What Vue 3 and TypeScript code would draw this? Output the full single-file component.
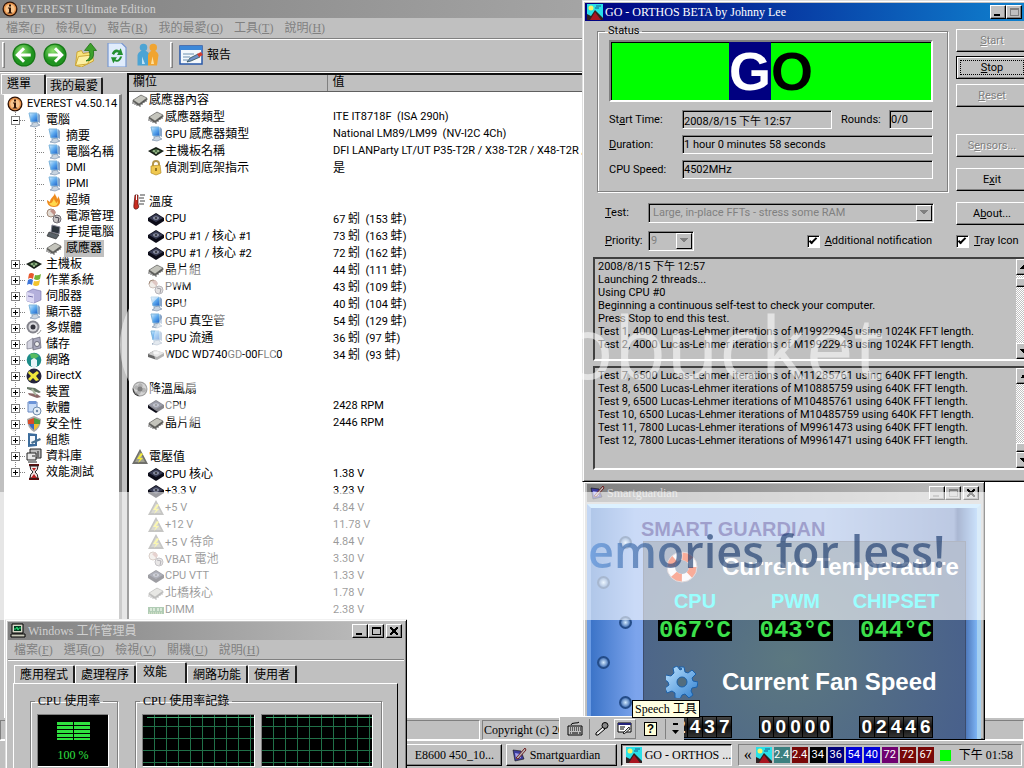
<script setup lang="ts">
import { h, ref } from 'vue'
import type { FunctionalComponent } from 'vue'

interface TreeNode { label: string; icon: string; children?: TreeNode[]; selected?: boolean }
interface Row { label: string; icon: string; value?: string; head?: boolean; blank?: boolean }

const Mixed: FunctionalComponent<{ text: string }> = (props) =>
  h('span', { class: 'mixed' },
    props.text.split(/([\u4e00-\u9fff]+)/).filter(Boolean).map((run) =>
      /[\u4e00-\u9fff]/.test(run) ? h('span', { class: 'han' }, run) : run))
Mixed.props = ['text']

const Icon: FunctionalComponent<{ name: string }> = (props) =>
  h('svg', { class: 'icon', viewBox: '0 0 16 16', 'aria-hidden': 'true' }, [h('use', { href: '#i-' + props.name })])
Icon.props = ['name']

const mainMenu = [['檔案', 'F'], ['檢視', 'V'], ['報告', 'R'], ['我的最愛', 'O'], ['工具', 'T'], ['說明', 'H']]
const taskMenu = [['檔案', 'F'], ['選項', 'O'], ['檢視', 'V'], ['關機', 'U'], ['說明', 'H']]
const tools = [['back', '上一頁'], ['forward', '下一頁'], ['folder', '上層'], ['refresh', '重新整理'], ['users', '使用者']]

const computer: TreeNode[] = [
  { label: '摘要', icon: 'pc' }, { label: '電腦名稱', icon: 'pc' }, { label: 'DMI', icon: 'pc' }, { label: 'IPMI', icon: 'pc' },
  { label: '超頻', icon: 'fire' }, { label: '電源管理', icon: 'power' }, { label: '手提電腦', icon: 'laptop' },
  { label: '感應器', icon: 'chip', selected: true },
]
const tree: TreeNode[] = [
  { label: '電腦', icon: 'pc', children: computer },
  { label: '主機板', icon: 'board' }, { label: '作業系統', icon: 'flag' }, { label: '伺服器', icon: 'server' },
  { label: '顯示器', icon: 'pc' }, { label: '多媒體', icon: 'speaker' }, { label: '儲存', icon: 'storage' },
  { label: '網路', icon: 'globe' }, { label: 'DirectX', icon: 'directx' }, { label: '裝置', icon: 'device' },
  { label: '軟體', icon: 'software' }, { label: '安全性', icon: 'shield' }, { label: '組態', icon: 'config' },
  { label: '資料庫', icon: 'database' }, { label: '效能測試', icon: 'hourglass' },
]

const rows: Row[] = [
  { label: '感應器內容', icon: 'chip', head: true },
  { label: '感應器類型', icon: 'chip', value: 'ITE IT8718F  (ISA 290h)' },
  { label: 'GPU 感應器類型', icon: 'pc', value: 'National LM89/LM99  (NV-I2C 4Ch)' },
  { label: '主機板名稱', icon: 'board', value: 'DFI LANParty LT/UT P35-T2R / X38-T2R / X48-T2R /' },
  { label: '偵測到底架指示', icon: 'lock', value: '是' },
  { label: '', icon: '', blank: true },
  { label: '溫度', icon: 'thermo', head: true },
  { label: 'CPU', icon: 'cpu', value: '67 蚓  (153 蚌)' },
  { label: 'CPU #1 / 核心 #1', icon: 'cpu', value: '73 蚓  (163 蚌)' },
  { label: 'CPU #1 / 核心 #2', icon: 'cpu', value: '72 蚓  (162 蚌)' },
  { label: '晶片組', icon: 'chip', value: '44 蚓  (111 蚌)' },
  { label: 'PWM', icon: 'power', value: '43 蚓  (109 蚌)' },
  { label: 'GPU', icon: 'pc', value: '40 蚓  (104 蚌)' },
  { label: 'GPU 真空管', icon: 'pc', value: '54 蚓  (129 蚌)' },
  { label: 'GPU 流通', icon: 'pc', value: '36 蚓  (97 蚌)' },
  { label: 'WDC WD740GD-00FLC0', icon: 'disk', value: '34 蚓  (93 蚌)' },
  { label: '', icon: '', blank: true },
  { label: '降溫風扇', icon: 'fan', head: true },
  { label: 'CPU', icon: 'cpu', value: '2428 RPM' },
  { label: '晶片組', icon: 'chip', value: '2446 RPM' },
  { label: '', icon: '', blank: true },
  { label: '電壓值', icon: 'volt', head: true },
  { label: 'CPU 核心', icon: 'cpu', value: '1.38 V' },
  { label: '+3.3 V', icon: 'cpu', value: '3.23 V' },
  { label: '+5 V', icon: 'volt', value: '4.84 V' },
  { label: '+12 V', icon: 'volt', value: '11.78 V' },
  { label: '+5 V 待命', icon: 'volt', value: '4.84 V' },
  { label: 'VBAT 電池', icon: 'power', value: '3.30 V' },
  { label: 'CPU VTT', icon: 'cpu', value: '1.33 V' },
  { label: '北橋核心', icon: 'chip', value: '1.78 V' },
  { label: 'DIMM', icon: 'dimm', value: '2.38 V' },
]

const logA = ref(`2008/8/15 下午 12:57
Launching 2 threads...
Using CPU #0
Beginning a continuous self-test to check your computer.
Press Stop to end this test.
Test 1, 4000 Lucas-Lehmer iterations of M19922945 using 1024K FFT length.
Test 2, 4000 Lucas-Lehmer iterations of M19922943 using 1024K FFT length.`)
const logB = ref(`Test 7, 6500 Lucas-Lehmer iterations of M11285761 using 640K FFT length.
Test 8, 6500 Lucas-Lehmer iterations of M10885759 using 640K FFT length.
Test 9, 6500 Lucas-Lehmer iterations of M10485761 using 640K FFT length.
Test 10, 6500 Lucas-Lehmer iterations of M10485759 using 640K FFT length.
Test 11, 7800 Lucas-Lehmer iterations of M9961473 using 640K FFT length.
Test 12, 7800 Lucas-Lehmer iterations of M9961471 using 640K FFT length.`)

const notify = ref(true)
const trayIcon = ref(true)
const temps = [['CPU', '067°C'], ['PWM', '043°C'], ['CHIPSET', '044°C']]
const fans = ['02437', '00000', '02446']
const tray = [['2.4', 'teal'], ['2.4', 'maroon'], ['34', 'black'], ['36', 'navy'], ['54', 'blue'], ['40', 'blue'], ['72', 'purple'], ['72', 'maroon'], ['67', 'maroon']]
</script>

<template>
  <div class="desktop">
    <svg class="defs" aria-hidden="true">
      <defs>
        <linearGradient id="g-blue" x1="0" y1="0" x2="1" y2="1"><stop offset="0" stop-color="#d6f0ff" /><stop offset=".5" stop-color="#5aa8ee" /><stop offset="1" stop-color="#1c5cc4" /></linearGradient>
        <radialGradient id="g-green" cx=".4" cy=".3"><stop offset="0" stop-color="#8fe070" /><stop offset="1" stop-color="#1f9420" /></radialGradient>
        <linearGradient id="g-ring" x1="0" y1="0" x2="1" y2="1"><stop offset="0" stop-color="#bfe4ff" /><stop offset="1" stop-color="#2f7fd0" /></linearGradient>
      </defs>
      <symbol id="i-info" viewBox="0 0 16 16"><circle cx="8" cy="8" r="7.5" fill="#2c1206" /><circle cx="8" cy="8" r="6.2" fill="#e8924a" /><circle cx="8" cy="8" r="4.8" fill="#f6c48c" /><path d="M6 6.5h3v5h1.200v1h-4.500v-1h1.300v-4H6zM7 3.500h2v2H7z" fill="#2c1206" /></symbol>
      <symbol id="i-pc" viewBox="0 0 16 16"><path d="M3 1l8 0 1 9-7 0z" fill="url(#g-blue)" stroke="#7db4dc" /><path d="M12 1l2 2v8l-2-1z" fill="#8aa6c8" /><path d="M6 11l5-1 1 2 2 1-5 2-5-1 2-1z" fill="#c8d4e0" stroke="#7088a4" stroke-width=".6" /></symbol>
      <symbol id="i-fire" viewBox="0 0 16 16"><path d="M9 1c0 3 2 3 2 6 1-1 1-2 1-3 4 6 2 11-4 11-5 0-7-3-7-7l3 2c0-4 4-5 5-9z" fill="#ee8a1c" /><path d="M8 6c0 3 2 3 2 5 1 0 1-1 2-2 0 4-2 5-4 5-3 0-4-1-5-3 3 1 4-2 5-5z" fill="#ffd84c" /></symbol>
      <symbol id="i-power" viewBox="0 0 16 16"><circle cx="5" cy="5" r="4" fill="#e4dcd4" stroke="#a08878" /><path d="M4 3l3-2 3 3-2 3z" fill="#c09088" /><circle cx="11" cy="11" r="4" fill="#c8c4c4" stroke="#706c74" /><path d="M9 9l4 1-1 4" fill="none" stroke="#403c48" /></symbol>
      <symbol id="i-laptop" viewBox="0 0 16 16"><path d="M6 1l8 2-1 7-8-2z" fill="#2c343c" stroke="#889" /><path d="M3 8l10 3-3 4-9-3z" fill="#596168" stroke="#222" stroke-width=".6" /></symbol>
      <symbol id="i-chip" viewBox="0 0 16 16"><path d="M0 9l9-6 7 4-9 7z" fill="#60605c" /><path d="M1 8l8-5 6 3-8 6z" fill="#c4c4bc" stroke="#444" stroke-width=".5" /><path d="M1 10v2M3 11v2M5 12v2M8 13v2M10 11v2M12 9v2M14 8v2" stroke="#333" stroke-width=".8" /></symbol>
      <symbol id="i-board" viewBox="0 0 16 16"><path d="M0 8l8-4 8 4-8 5z" fill="#182018" /><path d="M3 8l5-2 5 2-5 3z" fill="#4c7048" /><path d="M5 8h2M9 8h2M7 10h2" stroke="#d0e8b8" /></symbol>
      <symbol id="i-flag" viewBox="0 0 16 16"><path d="M3 2q2-2 5 0L7 7Q4 5 2 7z" fill="#e8582c" /><path d="M9 3q3 1 6-1l-1 5q-3 2-6 0z" fill="#74b438" /><path d="M2 8q3-2 5 0l-1 5q-3-2-5 0z" fill="#3c74d8" /><path d="M8 9q3 1 6-1l-1 5q-3 2-6 0z" fill="#f4c42c" /></symbol>
      <symbol id="i-server" viewBox="0 0 16 16"><path d="M1 4l6-3 8 2v9l-7 3-7-2z" fill="#b4b0dc" stroke="#7470a8" stroke-width=".6" /><path d="M1 4l7 2v9l-7-2z" fill="#dcd8f4" /><path d="M2 8l5 1" stroke="#7470a8" /></symbol>
      <symbol id="i-speaker" viewBox="0 0 16 16"><circle cx="7" cy="7" r="6.500" fill="#84848c" /><circle cx="7" cy="7" r="4.500" fill="#d8d8dc" /><circle cx="7" cy="7" r="2.500" fill="#34343c" /><path d="M11 14q3-1 4-4" stroke="#999" fill="none" /></symbol>
      <symbol id="i-storage" viewBox="0 0 16 16"><path d="M1 6l6-4v10l-6 1z" fill="#d4d4e0" stroke="#667" stroke-width=".6" /><path d="M7 3l7-2 1 11-8 2z" fill="#a8a8bc" stroke="#556" stroke-width=".6" /><circle cx="11" cy="8" r="2.500" fill="#eee" stroke="#445" stroke-width=".7" /></symbol>
      <symbol id="i-globe" viewBox="0 0 16 16"><circle cx="8" cy="8" r="7.300" fill="#1c8c88" /><path d="M4 2q6-2 9 2l-4 3-4-1z" fill="#58bc60" /><path d="M5 8l3-2 3 2v6l-3 2-3-2z" fill="#e8f4f8" /></symbol>
      <symbol id="i-directx" viewBox="0 0 16 16"><circle cx="8" cy="8" r="7.500" fill="#24243c" /><path d="M3 3l4 3 4-3 2 2-3 3 3 4-3 1-3-3-3 3-2-2 3-3-3-3z" fill="#f0e83c" /></symbol>
      <symbol id="i-device" viewBox="0 0 16 16"><path d="M1 3l8 1 6 4-2 1-12-4z" fill="#687868" /><path d="M2 9l9 1 4 3-4 1-8-3z" fill="#8c6868" /><path d="M6 5l4 6" stroke="#a8b8a0" stroke-width="2" /></symbol>
      <symbol id="i-software" viewBox="0 0 16 16"><path d="M2 2h9v10H2z" fill="#c8dcf8" stroke="#6888c0" /><path d="M3 1h7v3H3z" fill="#6c94d8" /><circle cx="11" cy="11" r="4" fill="#e8f0f8" stroke="#708cac" /><circle cx="11" cy="11" r="1.200" fill="#708cac" /></symbol>
      <symbol id="i-shield" viewBox="0 0 16 16"><path d="M8 0l7 3q0 9-7 13Q1 12 1 3z" fill="#a8a8a8" /><path d="M8 2v6H2L2 4z" fill="#d84c28" /><path d="M8 2l6 2v4H8z" fill="#4c9c3c" /><path d="M3 8h5v6q-4-3-5-6z" fill="#3c68c0" /><path d="M8 8h5q-1 4-5 6z" fill="#f0c030" /></symbol>
      <symbol id="i-config" viewBox="0 0 16 16"><path d="M2 1l9 1v12l-9 1z" fill="#3c6c9c" /><path d="M4 4h5v8H4z" fill="#f4f8fc" /><path d="M5 10l9-4 1 2-9 4z" fill="#487090" /></symbol>
      <symbol id="i-database" viewBox="0 0 16 16"><path d="M4 1h11v9H4z" fill="#bcbcbc" stroke="#222" /><path d="M1 5h9v7H1z" fill="#e8e8e8" stroke="#222" /><path d="M2 14h9M6 8h3M12 3v6" stroke="#222" /></symbol>
      <symbol id="i-hourglass" viewBox="0 0 16 16"><path d="M3 1h10M3 15h10" stroke="#5c1010" stroke-width="2" /><path d="M4 2h8q0 4-3 6 3 2 3 6H4q0-4 3-6-3-2-3-6z" fill="#f4e4e4" stroke="#222" /><path d="M6 4h4L8 7zM5 14l3-4 3 4z" fill="#b82020" /></symbol>
      <symbol id="i-lock" viewBox="0 0 16 16"><path d="M5 7V4q0-3 3-3t3 3v3" fill="none" stroke="#b4964c" stroke-width="2" /><path d="M3 6l9-1 1 8-5 2-5-2z" fill="#f0c850" stroke="#b48c24" stroke-width=".7" /><path d="M8 8v3" stroke="#7c5c10" stroke-width="1.500" /></symbol>
      <symbol id="i-thermo" viewBox="0 0 16 16"><path d="M3 1h3v9q2 4-1.500 5T2 10z" fill="#c82c20" stroke="#541010" stroke-width=".7" /><path d="M4 1h1v5H4z" fill="#fff" /><path d="M8 1h5M7 4h5M8 7h5M7 10h5" stroke="#444" /></symbol>
      <symbol id="i-cpu" viewBox="0 0 16 16"><path d="M0 7l8-5 8 5v3l-8 5-8-5z" fill="#0c0c18" /><path d="M1 7l7-4 7 4-7 4z" fill="#383c54" /><ellipse cx="8" cy="7" rx="3" ry="1.800" fill="#888ca0" /><ellipse cx="8" cy="7" rx="1.200" ry=".7" fill="#111" /></symbol>
      <symbol id="i-disk" viewBox="0 0 16 16"><path d="M0 7l7-4 9 3v3l-7 4-9-3z" fill="#686868" /><path d="M0 7l7-4 9 3-7 4z" fill="#d0d0d0" /><ellipse cx="8" cy="6" rx="3" ry="1.200" fill="#eee" /></symbol>
      <symbol id="i-fan" viewBox="0 0 16 16"><circle cx="8" cy="8" r="7.500" fill="#444" /><circle cx="8" cy="8" r="6.300" fill="#aaa" /><path d="M8 2q4 1 2 5 4-1 4 3-3 3-5 0 0 4-4 4-2-3 1-5-4 0-4-3 2-3 4-1 0-2 2-3z" fill="#666" /><circle cx="8" cy="8" r="2.500" fill="#000" /></symbol>
      <symbol id="i-volt" viewBox="0 0 16 16"><path d="M8 0l8 15H0z" fill="#70706c" /><path d="M8 3l5 10H3z" fill="#a0a090" /><path d="M9 4l-4 6h3l-2 4 5-5H8l3-4z" fill="#f4ec3c" /></symbol>
      <symbol id="i-dimm" viewBox="0 0 16 16"><path d="M0 5h16v7H0z" fill="#3c8048" /><path d="M2 6h2v3H2zM5 6h2v3H5zM9 6h2v3H9zM12 6h2v3h-2z" fill="#a4c8a0" /><path d="M1 11h14" stroke="#c8d890" stroke-dasharray="1 1" /></symbol>
      <symbol id="i-back" viewBox="0 0 16 16"><circle cx="8" cy="8" r="7.700" fill="#147814" /><circle cx="8" cy="8" r="6.900" fill="url(#g-green)" /><path d="M8 3.500L3.500 8 8 12.500M4 8h8.500" fill="none" stroke="#fff" stroke-width="2" /></symbol>
      <symbol id="i-forward" viewBox="0 0 16 16"><circle cx="8" cy="8" r="7.700" fill="#147814" /><circle cx="8" cy="8" r="6.900" fill="url(#g-green)" /><path d="M8 3.500l4.500 4.500L8 12.500M12 8H3.500" fill="none" stroke="#fff" stroke-width="2" /></symbol>
      <symbol id="i-folder" viewBox="0 0 16 16"><path d="M2 6l3-1 1 2 6-1 1 6-8 4-4-1z" fill="#f8e47c" stroke="#c8a030" stroke-width=".6" /><path d="M1 15l2-6 9-1-3 6z" fill="#fcf0a4" stroke="#c8a030" stroke-width=".6" /><path d="M8 12q4-2 2-7H7l4-5 4 5h-2q1 7-5 7z" fill="#3ca02c" stroke="#1c6c14" stroke-width=".5" /></symbol>
      <symbol id="i-refresh" viewBox="0 0 16 16"><path d="M2 0h9l3 3v13H2z" fill="#e0ecfc" stroke="#7898d0" stroke-width=".8" /><path d="M4.500 7q2-4 5-2l1-1.500L12 8H8l1-1.500Q7 5.500 6 8zM11.500 9q-2 5-5 3l-1 1.500L4 9.500h4L7 11q2 1 3-2z" fill="#249030" /></symbol>
      <symbol id="i-users" viewBox="0 0 16 16"><circle cx="5" cy="3" r="2.500" fill="#4ca4d4" /><path d="M1 15V8q1-3 4-3t4 3l-1 7z" fill="#4ca4d4" /><path d="M4 14V9l2 5z" fill="#bfe2f4" /><circle cx="11.500" cy="3" r="2.500" fill="#f0a430" /><path d="M8 15V8q1-3 3.500-3T15 8l-1 7z" fill="#f0a430" /><path d="M10 14l1-5 1 5z" fill="#fce0a0" /></symbol>
      <symbol id="i-orthos" viewBox="0 0 16 16"><path d="M0 0h16v16H0z" fill="#28e0e8" /><circle cx="4" cy="4" r="2.500" fill="#f4f468" /><path d="M9 2h5M8 4h4" stroke="#126" stroke-width=".7" /><path d="M0 16v-6l4 2 4-6 8 8v2z" fill="#302020" /><path d="M3 16l5-8 6 8z" fill="#a81420" /></symbol>
      <symbol id="i-guardian" viewBox="0 0 16 16"><path d="M2 3l8 1 3 8-9 2z" fill="#3c3c9c" stroke="#111" stroke-width=".6" /><path d="M4 6l5 1 1 4-5 1z" fill="#a0a0f0" /><path d="M5 11L14 1l1 2-8 9z" fill="#b8b8b8" stroke="#702020" /></symbol>
      <symbol id="i-task" viewBox="0 0 16 16"><path d="M2 1h11v9H2z" fill="#d8d8c8" stroke="#000" /><path d="M4 3h7v5H4z" fill="#003c20" /><path d="M4 6h2l1-2 1 3 1-2h2" stroke="#3f8" stroke-width=".8" fill="none" /><path d="M1 11h14v3H1z" fill="#c8c8b8" stroke="#000" /></symbol>
      <symbol id="i-camera" viewBox="0 0 16 16"><path d="M0 2h8l2 4-3 8H0z" fill="#555" /><circle cx="5" cy="8" r="3" fill="#aaa" /></symbol>
      <symbol id="i-keyboard" viewBox="0 0 16 16"><path d="M4 4q0-2 4-2t4-1M1 5h14v9H1z" fill="none" stroke="#000" /><path d="M3 7h1M5 7h1M7 7h1M9 7h1M11 7h1M13 7h1M3 9h1M5 9h1M7 9h1M9 9h1M11 9h1M13 9h1M3 12h1M5 12h6M12 12h2" stroke="#000" /></symbol>
      <symbol id="i-mic" viewBox="0 0 16 16"><path d="M9 6L2 12v2h2l7-6z" fill="#eee" stroke="#000" /><circle cx="11" cy="4.500" r="3" fill="#888" stroke="#000" /></symbol>
      <symbol id="i-speech" viewBox="0 0 16 16"><path d="M1 2h13v9H1z" fill="#fff" stroke="#000" /><path d="M1 2h13v2H1z" fill="#24247c" /><path d="M3 6h5M3 8h4" stroke="#000" /><path d="M12 6l-6 6 1 1 6-5z" fill="#ddd" stroke="#000" stroke-width=".8" /></symbol>
      <symbol id="i-more" viewBox="0 0 16 16"><path d="M6 2h5v2H6zM5 9h7l-3.500 4z" /></symbol>
    </svg>

    <main class="everest">
      <header class="title-bar inactive">
        <Icon name="info" /><h1>EVEREST Ultimate Edition</h1>
      </header>
      <nav class="menu-bar"><button v-for="m in mainMenu" :key="m[1]" type="button">{{ m[0] }}(<u>{{ m[1] }}</u>)</button></nav>
      <div class="toolbar">
        <i class="grip"></i>
        <button v-for="t in tools" :key="t[0]" type="button" :aria-label="t[1]"><Icon :name="t[0]" /></button>
        <i class="grip second"></i>
        <button type="button" class="report">
          <svg viewBox="0 0 24 20" class="report-icon" aria-hidden="true"><path d="M1 1h22v18H1z" fill="#f4f8fc" stroke="#2858a8" stroke-width="1.500" /><path d="M1 1h22v4H1z" fill="#3c88d8" /><path d="M4 9h11M4 12h7M4 15h5" stroke="#6c90b0" /><path d="M8 17l3-4 8-4 2 3-9 4z" fill="#7090c8" stroke="#244" stroke-width=".7" /><path d="M18 9l4-2 2 3-4 2z" fill="#d03c30" /></svg>
          報告
        </button>
      </div>
      <div class="split">
        <aside class="side">
          <div class="tabs" role="tablist"><button type="button" role="tab" aria-selected="true" class="on">選單</button><button type="button" role="tab" aria-selected="false">我的最愛</button></div>
          <div class="tree-box">
            <div class="root"><Icon name="info" /><span>EVEREST v4.50.14</span></div>
            <ul class="tree">
              <li v-for="n in tree" :key="n.label">
                <div class="node"><button type="button" class="toggle" :class="{ open: n.children }" :aria-label="n.label"></button><i class="dots"></i><Icon :name="n.icon" /><Mixed :text="n.label" class="node-text" /></div>
                <ul v-if="n.children" class="sub">
                  <li v-for="c in n.children" :key="c.label" class="node"><i class="dots long"></i><Icon :name="c.icon" /><Mixed :text="c.label" class="node-text" :class="{ selected: c.selected }" /></li>
                </ul>
              </li>
            </ul>
          </div>
        </aside>
        <section class="list">
          <table>
            <thead><tr><th>欄位</th><th>值</th></tr></thead>
            <tbody>
              <tr v-for="(r, i) in rows" :key="i">
                <td :class="{ head: r.head }"><div v-if="!r.blank" class="field"><Icon :name="r.icon" /><Mixed :text="r.label" /></div></td>
                <td class="val"><Mixed v-if="r.value" :text="r.value" /></td>
              </tr>
            </tbody>
          </table>
        </section>
      </div>
      <footer class="status"><span></span><span class="copy">Copyright (c) 20</span></footer>
    </main>

    <footer class="taskbar">
      <div class="task-list">
        <button type="button"><Icon name="camera" />E8600 450_10...</button>
        <button type="button"><Icon name="guardian" />Smartguardian</button>
        <button type="button" class="pressed"><Icon name="orthos" />GO - ORTHOS ...</button>
      </div>
      <div class="tray">
        <b>«</b><Icon name="orthos" />
        <span v-for="(t, i) in tray" :key="i" class="badge" :class="t[1]">{{ t[0] }}</span>
        <i class="green-box"></i><time>下午 01:58</time>
      </div>
    </footer>

    <section class="window guardian">
      <header class="title-bar inactive"><Icon name="guardian" /><h2>Smartguardian</h2><span class="caps"><button type="button" class="min off" aria-label="最小化"></button><button type="button" class="max off" aria-label="最大化"></button><button type="button" class="close" aria-label="關閉"></button></span></header>
      <div class="sg-body">
        <div class="rivets"><i v-for="n in 5" :key="n"></i></div>
        <div class="sg-main">
          <h3>SMART GUARDIAN</h3>
          <div class="sg-panel">
            <div class="sg-head">
              <svg viewBox="0 0 32 32" aria-hidden="true"><circle cx="16" cy="16" r="11" fill="none" stroke="#f4f4fa" stroke-width="8" /><circle cx="16" cy="16" r="11" fill="none" stroke="#f03000" stroke-width="8" stroke-dasharray="9 8.300" /><circle cx="16" cy="16" r="15" fill="none" stroke="#b0a0a8" /></svg>
              <h4>Current Temperature</h4>
            </div>
            <div class="gauges"><div v-for="t in temps" :key="t[0]"><h5>{{ t[0] }}</h5><output class="led">{{ t[1] }}</output></div></div>
            <div class="sg-head fan-head">
              <svg viewBox="0 0 32 32" aria-hidden="true"><path d="M13 1l5 0 1 5 3 1 4-3 4 4-4 4 1 3 5 1-1 5-5 1-1 3 2 4-4 3-4-4-3 1-2 4-5-1 0-5-3-2-5 2-2-5 4-3-1-3-4-3 2-4 5 1 3-3-1-5 4-2 3 4 2-1z" fill="url(#g-ring)" stroke="#1c60a8" /><circle cx="16" cy="16" r="5" fill="#526d7f" stroke="#1c60a8" /></svg>
              <h4>Current Fan Speed</h4>
            </div>
            <div class="gauges counters"><output v-for="f in fans" :key="f"><span v-for="(d, i) in f" :key="i">{{ d }}</span></output></div>
          </div>
        </div>
      </div>
    </section>

    <section class="window orthos">
      <header class="title-bar active"><Icon name="orthos" /><h2>GO - ORTHOS BETA by Johnny Lee</h2><span class="caps"><button type="button" class="min" aria-label="最小化"></button><button type="button" class="max off" aria-label="最大化"></button></span></header>
      <form class="o-body" @submit.prevent>
        <div class="o-top">
          <div class="o-left">
            <fieldset>
              <legend>Status</legend>
              <div class="go"><mark>G</mark>O</div>
              <div class="line"><label for="start">St<u>a</u>rt Time:</label><input id="start" value="2008/8/15 下午 12:57" readonly /><label for="rounds" class="r-label">Rounds:</label><input id="rounds" class="rounds" value="0/0" readonly /></div>
              <div class="line"><label for="dur"><u>D</u>uration:</label><input id="dur" value="1 hour 0 minutes 58 seconds" readonly /></div>
              <div class="line"><label for="speed">CPU Speed:</label><input id="speed" value="4502MHz" readonly /></div>
            </fieldset>
            <div class="opts">
              <div class="opt"><label for="test"><u>T</u>est:</label><span class="drop"><select id="test" disabled><option>Large, in-place FFTs - stress some RAM</option></select></span></div>
              <div class="opt"><label for="prio"><u>P</u>riority:</label><span class="drop short"><select id="prio" disabled><option>9</option></select></span><label class="check"><input v-model="notify" type="checkbox" /><span><u>A</u>dditional notification</span></label></div>
            </div>
          </div>
          <div class="o-buttons">
            <button type="button" disabled><u>S</u>tart</button>
            <button type="button" class="default"><u>S</u>top</button>
            <button type="button" disabled><u>R</u>eset</button>
            <button type="button" disabled class="gap-big">S<u>e</u>nsors...</button>
            <button type="button" class="gap-mid">E<u>x</u>it</button>
            <button type="button" class="gap-mid">A<u>b</u>out...</button>
            <label class="check"><input v-model="trayIcon" type="checkbox" /><span><u>T</u>ray Icon</span></label>
          </div>
        </div>
        <div class="log"><textarea v-model="logA" readonly aria-label="Log 1" wrap="off"></textarea><div class="scroll top"><button type="button" class="up" aria-label="Up"></button><i></i><button type="button" class="down" aria-label="Down"></button></div></div>
        <div class="log"><textarea v-model="logB" readonly aria-label="Log 2" wrap="off"></textarea><div class="scroll bottom"><button type="button" class="up" aria-label="Up"></button><i></i><button type="button" class="down" aria-label="Down"></button></div></div>
      </form>
    </section>

    <section class="window taskmgr">
      <header class="title-bar inactive"><Icon name="task" /><h2>Windows 工作管理員</h2><span class="caps"><button type="button" class="min" aria-label="最小化"></button><button type="button" class="max" aria-label="最大化"></button><button type="button" class="close" aria-label="關閉"></button></span></header>
      <nav class="menu-bar"><button v-for="m in taskMenu" :key="m[1]" type="button">{{ m[0] }}(<u>{{ m[1] }}</u>)</button></nav>
      <div class="tm-body">
        <div class="tabs" role="tablist">
          <button v-for="t in ['應用程式', '處理程序', '效能', '網路功能', '使用者']" :key="t" type="button" role="tab" :aria-selected="t === '效能'" :class="{ on: t === '效能' }">{{ t }}</button>
        </div>
        <div class="tm-page">
          <fieldset class="usage"><legend>CPU 使用率</legend><div class="meter"><div class="bars"><i></i><i></i></div><span>100 %</span></div></fieldset>
          <fieldset class="history"><legend>CPU 使用率記錄</legend><div class="charts"><div class="chart"></div><div class="chart"></div></div></fieldset>
        </div>
      </div>
    </section>

    <div class="langbar">
      <span class="cell"><Icon name="keyboard" /></span><span class="cell"><Icon name="mic" /></span><span class="cell hot"><Icon name="speech" /></span><span class="cell"><b class="help">?</b></span><span class="cell more"><Icon name="more" /></span>
    </div>
    <div class="tip" role="tooltip">Speech 工具</div>

    <div class="mark-band" aria-hidden="true"></div>
    <div class="mark-tag" aria-hidden="true">emories for less!</div>
    <div class="mark-name" aria-hidden="true">obucket</div>
    <svg class="mark-ring" viewBox="0 0 160 160" aria-hidden="true"><circle cx="80" cy="80" r="70" fill="none" stroke="#fff" stroke-width="16" /><circle cx="80" cy="80" r="38" fill="none" stroke="#fff" stroke-width="14" /></svg>
  </div>
</template>

<style>
html, body { margin: 0; background: #c0c0c0; }
.mixed { white-space: pre; }
.han { font-size: 12px; }
.icon { width: 16px; height: 16px; flex: none; display: block; }
</style>

<style scoped>
.desktop { position: relative; display: flex; flex-direction: column; height: 100vh; min-height: 768px; overflow: hidden; background: #c0c0c0; color: #000; font: 11px/16px Roboto, "Noto Sans CJK TC", sans-serif; }
.desktop *, .desktop *::before { box-sizing: border-box; }
.defs { position: absolute; width: 0; height: 0; }
button, input, select, textarea { font: inherit; color: inherit; border-radius: 0; margin: 0; padding: 0; }
h1, h2, h3, h4, h5, ul { margin: 0; padding: 0; list-style: none; font-weight: 400; }
fieldset { margin: 0; padding: 0; min-width: 0; border: 1px solid #808080; box-shadow: 1px 1px 0 #fff, inset 1px 1px 0 #fff; }
output { display: block; }

.title-bar { display: flex; align-items: center; gap: 2px; height: 18px; padding: 0 2px; font-family: "Liberation Serif", "Noto Sans CJK TC", serif; font-size: 12px; line-height: 18px; }
.title-bar h1, .title-bar h2 { flex: 1; font-size: 12px; white-space: nowrap; }
.inactive { background: linear-gradient(90deg, #808080, #c0c0c0); color: #d0d0d0; }
.active { background: linear-gradient(90deg, #000080, #1084d0); color: #fff; }
.menu-bar { display: flex; gap: 11px; height: 20px; padding: 0 6px; font-family: "Liberation Serif", "Noto Sans CJK TC", serif; font-size: 12px; line-height: 20px; color: #808080; }
.menu-bar button { background: none; border: 0; white-space: nowrap; }

.everest { flex: 1; min-height: 0; display: flex; flex-direction: column; }
.everest .title-bar { padding: 0 2px; }
.toolbar { display: flex; align-items: center; height: 34px; padding-left: 2px; gap: 7px; border-top: 1px solid #808080; border-bottom: 1px solid #808080; box-shadow: inset 0 1px 0 #fff, 0 1px 0 #fff; }
.toolbar button { border: 0; background: none; }
.toolbar button .icon { width: 24px; height: 24px; }
.grip { width: 3px; height: 26px; border: 1px solid; border-color: #fff #808080 #808080 #fff; }
.grip.second { margin-left: 3px; }
.toolbar .report { display: flex; align-items: center; gap: 4px; margin-left: -1px; font-size: 12px; }
.report-icon { width: 24px; height: 20px; }
.split { flex: 1; min-height: 0; display: flex; }
.side { flex: none; width: 127px; display: flex; flex-direction: column; padding-top: 2px; }
.tabs { display: flex; align-items: flex-end; font-size: 12px; line-height: 16px; }
.tabs button { background: #c0c0c0; border: 0; border-right: 2px solid #202020; border-top: 1px solid #fff; border-left: 1px solid #fff; padding: 0 4px; white-space: nowrap; border-top-right-radius: 2px; }
.side .tabs { height: 20px; padding-left: 1px; }
.side .tabs button { height: 17px; padding: 0 3px; }
.side .tabs .on { height: 20px; padding: 0 13px 2px 5px; }
.tree-box { flex: 1; min-height: 0; margin-right: 5px; padding: 1px 0 0 5px; background: #fff; border-left: 4px solid #c0c0c0; border-right: 3px solid #808080; overflow: hidden; white-space: nowrap; border-top: 1px solid #fff; }
.root, .node { display: flex; align-items: center; height: 16px; }
.root { gap: 4px; margin-left: -2px; }
.tree { margin-left: 2px; background: repeating-linear-gradient(#808080 0 1px, transparent 1px 2px) 4px 0 / 1px 360px no-repeat; }
.toggle { flex: none; position: relative; width: 9px; height: 9px; border: 1px solid #808080; background: linear-gradient(#000, #000) center / 5px 1px no-repeat, linear-gradient(#000, #000) center / 1px 5px no-repeat, #fff; }
.toggle.open { background: linear-gradient(#000, #000) center / 5px 1px no-repeat, #fff; }
.dots { flex: none; width: 5px; height: 1px; margin-right: 1px; background: repeating-linear-gradient(90deg, #808080 0 1px, transparent 1px 2px); }
.dots.long { width: 10px; margin-left: 24px; }
.sub { background: repeating-linear-gradient(#808080 0 1px, transparent 1px 2px) 24px 0 / 1px 120px no-repeat; }
.node-text { margin-left: 2px; padding: 0 2px; }
.selected { background: #c0c0c0; }

.list { flex: 1; min-width: 0; margin-top: 1px; background: #fff; border-left: 2px solid #101010; border-top: 2px solid #101010; overflow: hidden; }
table { width: 100%; border-collapse: collapse; table-layout: fixed; }
th { height: 16px; padding: 0 4px; background: #c0c0c0; text-align: left; font-weight: 400; font-size: 12px; line-height: 15px; border-bottom: 1px solid #606060; }
th:first-child { width: 198px; border-right: 1px solid #808080; }
th:last-child { border-left: 1px solid #fff; padding-left: 5px; }
td { height: 17px; padding: 0 0 0 19px; line-height: 16px; white-space: nowrap; }
td.head { padding-left: 3px; }
td.val { padding-left: 6px; }
.field { display: flex; align-items: center; gap: 1px; }
.status { flex: none; display: flex; gap: 2px; height: 22px; padding-top: 2px; font: 12px/19px "Liberation Serif", serif; }
.status span { width: 480px; border: 1px solid; border-color: #808080 #fff #fff #808080; }
.status .copy { flex: 1; padding-left: 1px; }

.taskbar { flex: none; display: flex; justify-content: space-between; gap: 6px; height: 28px; padding: 3px 2px 2px; border-top: 1px solid #fff; font: 12px/20px "Liberation Serif", "Noto Sans CJK TC", serif; }
.task-list { flex: 1; display: flex; justify-content: flex-end; gap: 4px; }
.task-list button { display: flex; align-items: center; gap: 3px; width: 111px; height: 22px; padding: 0 4px; background: #c0c0c0; border: 1px solid; border-color: #fff #000 #000 #fff; box-shadow: inset -1px -1px 0 #808080; white-space: nowrap; }
.task-list .pressed { background: #e0e0e0; border-color: #000 #fff #fff #000; box-shadow: inset 1px 1px 0 #808080; }
.tray { flex: none; display: flex; align-items: center; gap: 2px; height: 22px; padding: 0 8px 0 5px; border: 1px solid; border-color: #808080 #fff #fff #808080; }
.tray b { width: 10px; font-size: 16px; font-weight: 400; }
.badge { width: 16px; height: 16px; overflow: hidden; color: #fff; font: 11px/16px Roboto, sans-serif; text-align: center; }
.teal { background: #3c8080; } .maroon { background: #780808; } .black { background: #000; } .navy { background: #000078; } .blue { background: #0000d8; } .purple { background: #700070; }
.green-box { width: 11px; height: 11px; margin: 0 6px 0 4px; background: #0f0; }

.window { position: absolute; background: #c0c0c0; border: 1px solid; border-color: #dfdfdf #000 #000 #dfdfdf; box-shadow: inset 1px 1px 0 #fff, inset -1px -1px 0 #808080; overflow: hidden; }
.caps { display: flex; }
.caps button { position: relative; width: 16px; height: 14px; background: #c0c0c0; border: 1px solid; border-color: #fff #000 #000 #fff; box-shadow: inset -1px -1px 0 #808080; }
.caps .close { margin-left: 2px; }
.caps button::before { content: ""; display: block; margin: auto; }
.min::before { width: 6px; height: 2px; background: #000; transform: translate(-1px, 3px); }
.max::before { width: 9px; height: 8px; border: 1px solid #000; border-top-width: 2px; }
.caps .close::before { width: 8px; height: 8px; background: linear-gradient(45deg, transparent 43%, #000 43% 57%, transparent 57%), linear-gradient(-45deg, transparent 43%, #000 43% 57%, transparent 57%); }
.off::before { filter: invert(.5); }

.orthos { left: 582px; top: 0; right: -16px; padding: 2px; }
.orthos .caps { margin-right: 13px; }
.orthos .o-body { padding: 3px 0 4px 8px; line-height: 14px; }
.o-top { display: flex; gap: 8px; }
.o-left { flex: 1; padding-left: 4px; }
.o-left fieldset { padding: 0 14px 12px 11px; }
legend { margin-left: -4px; padding: 0 3px; }
.orthos legend { line-height: 14px; }
.go { margin-top: 2px; height: 62px; background: #0f0; border: 2px solid; border-color: #808080 #fff #fff #808080; box-shadow: inset 1px 1px 0 #000; text-align: center; font: bold 54px/58px "Liberation Sans", sans-serif; }
.go mark { display: inline-block; height: 58px; background: #000080; color: #fff; }
.line { display: flex; align-items: center; margin-top: 6px; }
.line label { width: 73px; }
.line input { flex: 1; min-width: 0; height: 19px; padding: 0 1px; background: #c0c0c0; border: 1px solid; border-color: #808080 #fff #fff #808080; box-shadow: inset 1px 1px 0 #000; }
.line .r-label { width: 48px; margin-left: 9px; }
.line .rounds { flex: 0 0 44px; }
.go + .line { margin-top: 8px; }
.opts { padding: 11px 14px 6px 8px; }
.opt { display: flex; align-items: center; height: 20px; margin-bottom: 8px; }
.opt > label:first-child { width: 43px; }
.opts .opt:last-child { margin-bottom: 0; }
.drop { position: relative; flex: 1; height: 20px; border: 1px solid; border-color: #808080 #fff #fff #808080; box-shadow: inset 1px 1px 0 #000; }
.drop select { width: 100%; height: 18px; padding: 0 4px; border: 0; background: none; color: #808080; opacity: 1; appearance: none; }
.drop::before { content: ""; position: absolute; right: 1px; top: 1px; width: 16px; height: 16px; border: 1px solid; border-color: #fff #000 #000 #fff; background: conic-gradient(from -45deg at 50% 75%, #808080 90deg, transparent 0) center / 8px 6px no-repeat; }
.drop.short { flex: 0 0 46px; }
.drop.short select { padding: 0 2px; }
.check { display: flex; align-items: center; gap: 5px; white-space: nowrap; }
.opt .check { margin-left: auto; padding-right: 2px; }
.check input { appearance: none; width: 13px; height: 13px; background: #fff; border: 1px solid; border-color: #808080 #fff #fff #808080; box-shadow: inset 1px 1px 0 #000; }
.check input:checked::before { content: ""; display: block; width: 8px; height: 4px; margin: 2px 1px; border-left: 2px solid #000; border-bottom: 2px solid #000; transform: rotate(-45deg); }
.o-buttons { width: 81px; flex: none; }
.o-buttons button { display: block; width: 72px; height: 23px; margin: 4px 0 0; background: #c0c0c0; border: 1px solid; border-color: #fff #000 #000 #fff; box-shadow: inset -1px -1px 0 #808080; }
.o-buttons button:first-child { margin-top: 5px; }
.o-buttons button:disabled { color: #808080; text-shadow: 1px 1px 0 #fff; }
.o-buttons .default { border-color: #000; box-shadow: inset 1px 1px 0 #fff, inset -1px -1px 0 #808080; outline: 1px dotted #000; outline-offset: -5px; }
.o-buttons .default + button { margin-top: 5px; }
.o-buttons .gap-big { margin-top: 27px; }
.o-buttons .gap-mid { margin-top: 11px; }
.o-buttons .check { margin-top: 9px; }
.log { display: flex; height: 104px; margin: 0 3px 5px 0; border: 2px solid; border-color: #404040 #fff #fff #404040; }
.log textarea { flex: 1; padding: 1px 3px; border: 0; resize: none; overflow: hidden; background: #c0c0c0; line-height: 13px; white-space: pre; outline: 0; }
.scroll { width: 16px; display: flex; flex-direction: column; background: repeating-conic-gradient(#fff 0 25%, #c0c0c0 0 50%) 0 0 / 2px 2px; }
.scroll button, .scroll i { flex: none; height: 16px; background: #c0c0c0; border: 1px solid; border-color: #fff #000 #000 #fff; box-shadow: inset -1px -1px 0 #808080; }
.scroll i { height: 9px; margin-top: 3px; }
.scroll .down { margin-top: auto; }
.scroll.bottom i { margin-top: auto; }
.scroll.bottom .down { margin-top: 0; }
.up::before, .down::before { content: ""; display: block; margin: auto; width: 8px; height: 4px; background: conic-gradient(from 135deg at 50% 0, #000 90deg, transparent 0); }
.down::before { background: conic-gradient(from -45deg at 50% 100%, #000 90deg, transparent 0); }

.guardian { left: 583px; top: 481px; width: 402px; bottom: 28px; padding: 2px 3px 0; display: flex; flex-direction: column; }
.guardian .title-bar { flex: none; }
.sg-body { flex: 1; min-height: 0; display: flex; margin-top: 2px; border: 4px solid; border-bottom: 0; border-color: #a8dcff #a4d0f0 #a8dcff #6c9ce4; padding-right: 11px; background: linear-gradient(90deg, #3c74c8, #7ca4ec 45px, #88a8e0 60%, #5878b8 94%, #2c4c90 95%, #7cb4f4); }
.rivets { flex: none; width: 52px; padding-top: 28px; }
.rivets i { display: block; width: 13px; height: 13px; margin: 0 0 27px 6px; border-radius: 50%; border: 2px solid #244c88; background: radial-gradient(#d0e8ff, #4c78b8 70%); }
.rivets i:nth-child(odd) { margin-left: 28px; }
.sg-main { flex: 1; min-width: 0; display: flex; flex-direction: column; padding-top: 9px; }
.sg-main h3 { flex: none; height: 24px; margin-left: -2px; color: #101080; font: bold 20px/24px "Liberation Sans", sans-serif; }
.sg-panel { flex: 1; padding: 8px 16px 0 14px; border: 1px solid #3c4c6c; border-bottom: 0; background: radial-gradient(circle at 45% 60%, #5c7880, #48608c 90%); }
.sg-head { display: flex; align-items: center; gap: 24px; height: 34px; }
.sg-head svg { width: 32px; height: 32px; margin-left: 8px; flex: none; }
.sg-head h4 { color: #fff; font: bold 24px/28px "Liberation Sans", sans-serif; white-space: nowrap; }
.gauges { display: grid; grid-template-columns: 74px 74px 74px; justify-content: space-between; padding-right: 16px; }
.gauges div { text-align: center; }
.gauges h5 { display: flex; justify-content: center; height: 36px; padding-top: 3px; color: #00ffff; font: bold 20px/28px "Liberation Sans", sans-serif; }
.led { height: 21px; background: #000; color: #3ce04c; font: bold 24px/21px "Liberation Mono", monospace; }
.fan-head { margin: 24px 0 17px; }
.counters output { display: flex; gap: 1px; height: 22px; padding: 1px; background: #000; }
.counters span { flex: 1; background: linear-gradient(#444, #111 50%, #333); color: #fff; text-align: center; font: bold 19px/20px "Liberation Sans", sans-serif; }

.taskmgr { left: 5px; top: 619px; width: 402px; bottom: -5px; padding: 2px; }
.taskmgr .menu-bar { margin-bottom: 3px; border-bottom: 1px solid #808080; box-shadow: 0 1px 0 #fff; }
.tm-body { padding: 0 6px 0 5px; }
.taskmgr .tabs { height: 20px; padding-left: 1px; }
.taskmgr .tabs button { height: 18px; padding: 0 5px; }
.taskmgr .tabs .on { height: 21px; padding: 0 18px 3px 6px; }
.tm-page { display: flex; align-items: flex-start; gap: 17px; height: 110px; padding: 10px 15px 0 16px; border: 1px solid; border-color: #fff #000 #000 #fff; font: 12px/14px "Liberation Serif", "Noto Sans CJK TC", serif; }
.tm-page fieldset { height: 100px; padding: 6px 8px 6px 6px; }
.tm-page legend { margin-left: -2px; }
.usage { flex: none; width: 88px; }
.history { flex: 1; }
.meter, .chart { height: 53px; background: #000; border: 1px solid; border-color: #808080 #fff #fff #808080; }
.meter { color: #30e040; text-align: center; padding-top: 7px; }
.bars { display: flex; justify-content: center; gap: 1px; margin-bottom: 8px; }
.bars i { width: 16px; height: 18px; background: repeating-linear-gradient(#30e040 0 3px, #000 3px 4px); }
.charts { display: grid; grid-template-columns: 1fr 1fr; gap: 6px; }
.chart { background: linear-gradient(#40a870, #40a870) 4px 2px / 100% 1px no-repeat, repeating-linear-gradient(transparent 0 11px, #207048 11px 12px), repeating-linear-gradient(90deg, transparent 0 11px, #207048 11px 12px), #000; }

.langbar { position: absolute; left: 559px; bottom: 28px; display: flex; align-items: center; height: 24px; background: #c0c0c0; border-top: 1px solid #fff; border-left: 1px solid #fff; }
.cell { display: flex; align-items: center; justify-content: center; width: 24px; height: 20px; }
.cell:first-child { width: 30px; border-right: 1px solid #808080; }
.hot { width: 22px; border: 1px solid; border-color: #fff #808080 #808080 #fff; }
.hot + .cell { width: 30px; border-right: 1px solid #808080; }
.help { width: 13px; height: 14px; background: #ffffd8; border: 1px solid #000; font: bold 12px/12px "Liberation Sans", sans-serif; text-align: center; }
.more { width: 18px; }
.tip { position: absolute; left: 632px; bottom: 50px; height: 18px; padding: 0 2px; background: #ffffe1; border: 1px solid #000; font: 12px/16px "Liberation Serif", "Noto Sans CJK TC", serif; white-space: nowrap; }

.mark-band, .mark-tag, .mark-name, .mark-ring { position: absolute; pointer-events: none; }
.mark-band { left: 0; right: 0; top: 492px; height: 128px; background: rgba(255, 255, 255, .6); }
.mark-tag { left: 588px; top: 526px; background: linear-gradient(90deg, #5c94dcb0, #143468a0 100px); background-clip: text; color: transparent; font: 600 45px/50px "Open Sans", sans-serif; white-space: nowrap; }
.mark-name { left: 562px; top: 296px; color: rgba(255, 255, 255, .55); font: 500 86px/100px "Open Sans", sans-serif; white-space: nowrap; }
.mark-ring { left: 118px; top: 265px; width: 160px; height: 160px; opacity: .5; }
</style>
